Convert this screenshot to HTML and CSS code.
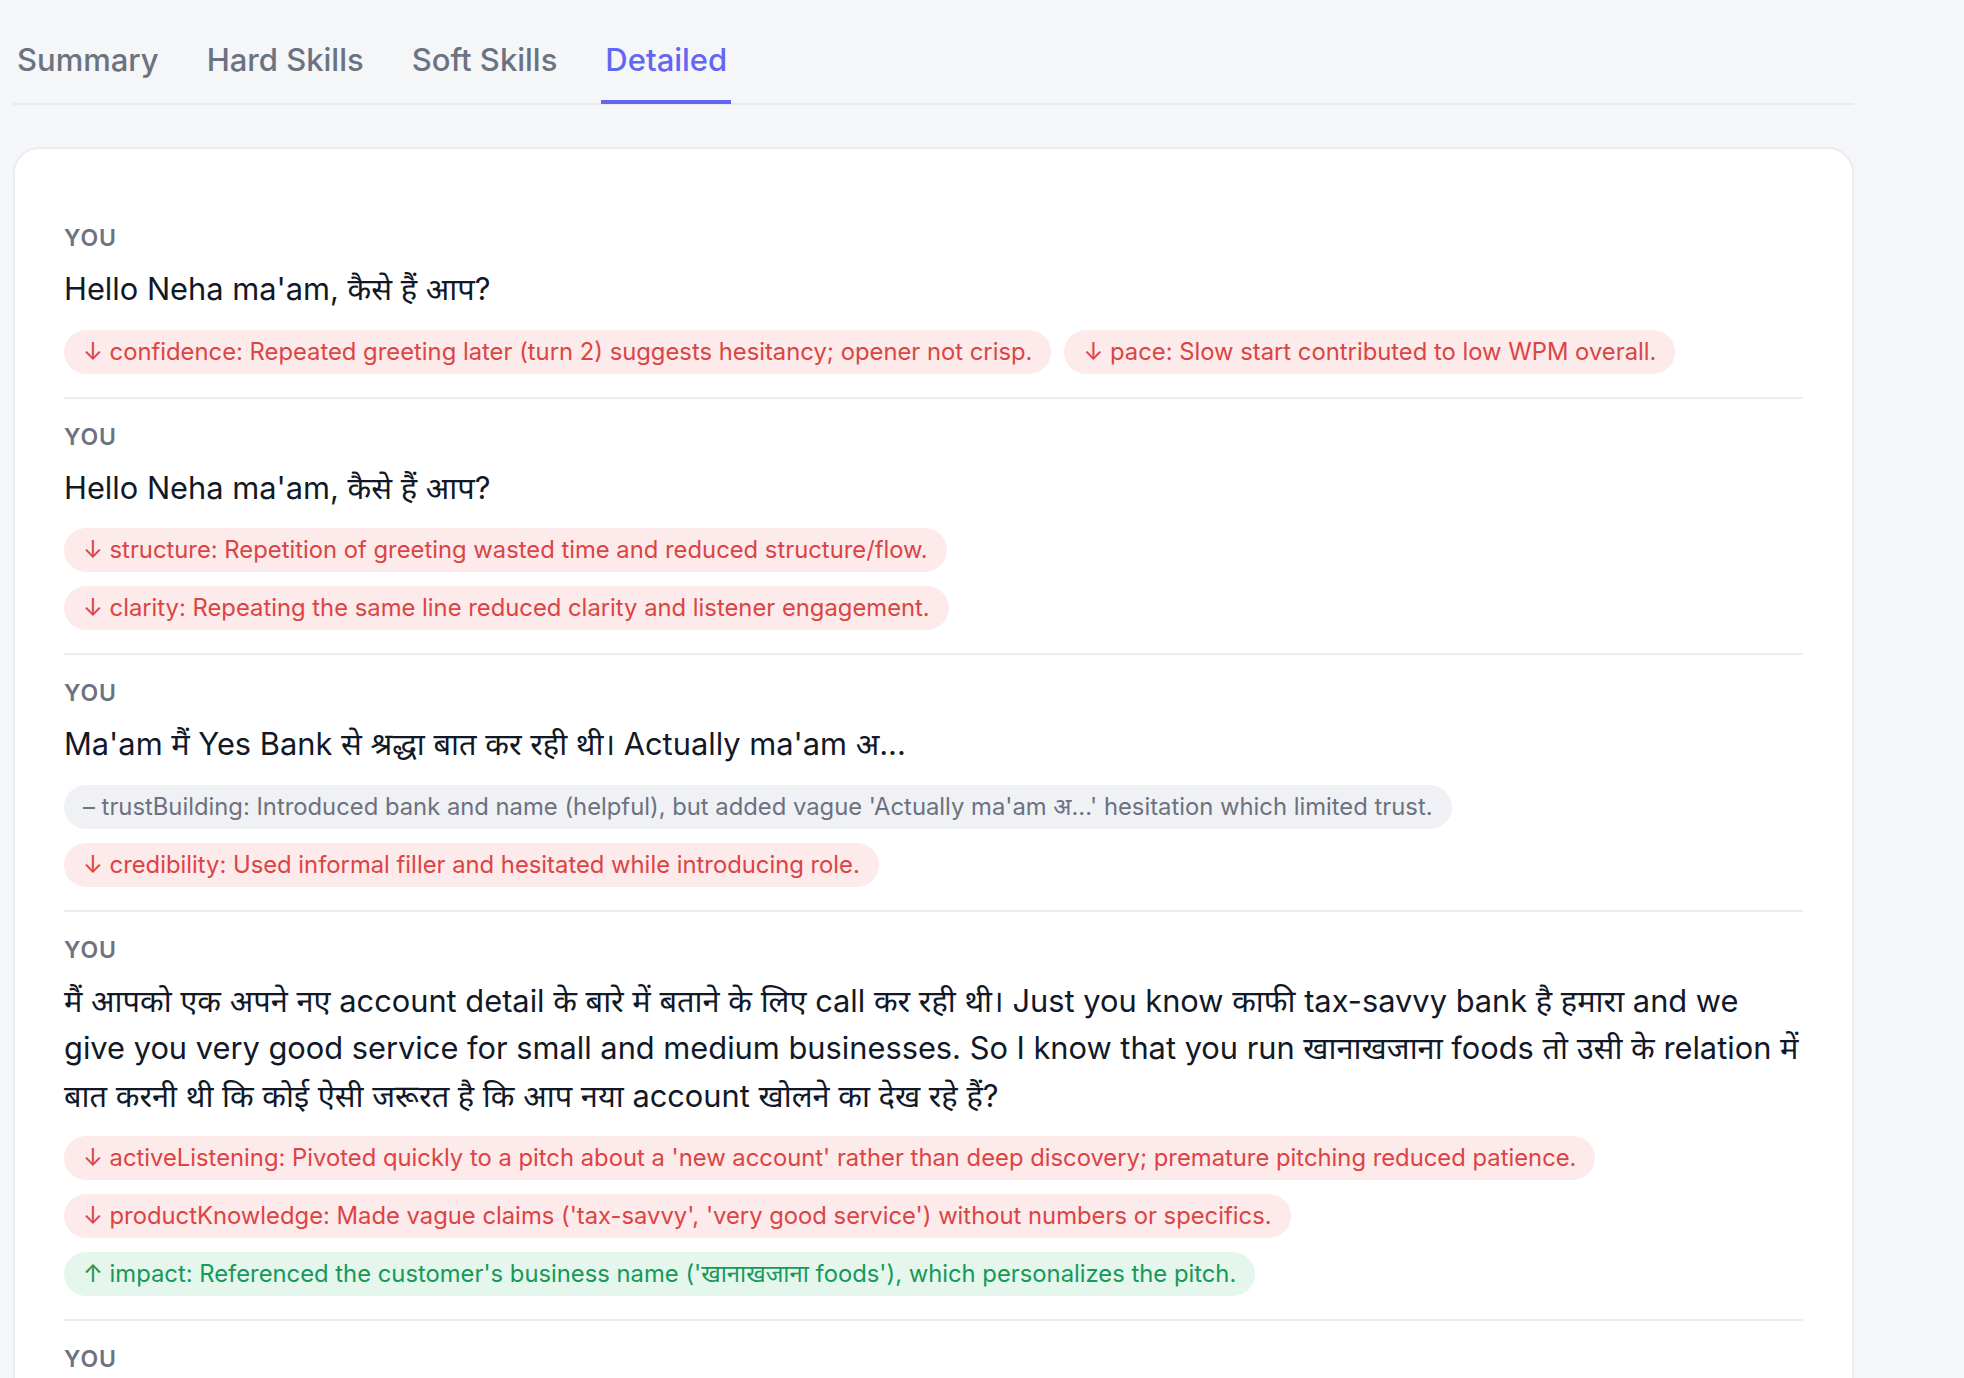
FILE: index.html
```html
<!DOCTYPE html>
<html lang="en">
<head>
<meta charset="UTF-8">
<meta name="viewport" content="width=device-width, initial-scale=1.0">
<title>Call Review - Detailed</title>
<link rel="stylesheet" href="styles.css">
</head>
<body>
<div class="page">
    <div class="tabs">
        <a class="tab" href="#">Summary</a>
        <a class="tab" href="#">Hard Skills</a>
        <a class="tab" href="#">Soft Skills</a>
        <a class="tab active" href="#">Detailed</a>
    </div>

    <div class="card">
        <div class="turn">
            <div class="speaker">You</div>
            <p class="message">Hello Neha ma'am, कैसे हैं आप?</p>
            <div class="notes">
                <span class="note down">↓ confidence: Repeated greeting later (turn 2) suggests hesitancy; opener not crisp.</span>
                <span class="note down">↓ pace: Slow start contributed to low WPM overall.</span>
            </div>
        </div>

        <div class="turn">
            <div class="speaker">You</div>
            <p class="message">Hello Neha ma'am, कैसे हैं आप?</p>
            <div class="notes">
                <span class="note down">↓ structure: Repetition of greeting wasted time and reduced structure/flow.</span>
                <span class="note down">↓ clarity: Repeating the same line reduced clarity and listener engagement.</span>
            </div>
        </div>

        <div class="turn">
            <div class="speaker">You</div>
            <p class="message">Ma'am मैं Yes Bank से श्रद्धा बात कर रही थी। Actually ma'am अ...</p>
            <div class="notes">
                <span class="note neutral">– trustBuilding: Introduced bank and name (helpful), but added vague 'Actually ma'am अ...' hesitation which limited trust.</span>
                <span class="note down">↓ credibility: Used informal filler and hesitated while introducing role.</span>
            </div>
        </div>

        <div class="turn">
            <div class="speaker">You</div>
            <p class="message">मैं आपको एक अपने नए account detail के बारे में बताने के लिए call कर रही थी। Just you know काफी tax-savvy bank है हमारा and we give you very good service for small and medium businesses. So I know that you run खानाखजाना foods तो उसी के relation में बात करनी थी कि कोई ऐसी जरूरत है कि आप नया account खोलने का देख रहे हैं?</p>
            <div class="notes">
                <span class="note down">↓ activeListening: Pivoted quickly to a pitch about a 'new account' rather than deep discovery; premature pitching reduced patience.</span>
                <span class="note down">↓ productKnowledge: Made vague claims ('tax-savvy', 'very good service') without numbers or specifics.</span>
                <span class="note up">↑ impact: Referenced the customer's business name ('खानाखजाना foods'), which personalizes the pitch.</span>
            </div>
        </div>

        <div class="turn">
            <div class="speaker">You</div>
        </div>
    </div>
</div>
</body>
</html>
```

FILE: styles.css
```css
body {
    margin: 0;
    padding: 0;
    background-color: #f5f6f8;
    font-family: Inter, "Noto Sans", "DejaVu Sans", sans-serif;
    color: #111827;
    overflow: hidden;
}

.page {
    width: 1841px;
    margin-left: 13px;
}

/* tab strip */
.tabs {
    display: flex;
    gap: 40px;
    padding-top: 40px;
    border-bottom: 2px solid #e8e9ee;
}
.tab {
    display: block;
    padding: 0 4px 20px;
    font-size: 31px;
    line-height: 40px;
    font-weight: 500;
    color: #6b7280;
    text-decoration: none;
    border-bottom: 4px solid transparent;
    margin-bottom: -1px;
}
.tab.active {
    color: #6366f1;
    border-bottom-color: #6366f1;
}

/* transcript card */
.card {
    margin-top: 42px;
    background-color: #fff;
    border: 2px solid #ebecf1;
    border-radius: 26px;
    padding: 51px 49px 48px;
    height: 1400px;
}
.turn {
    padding: 26px 0 23px;
    border-bottom: 2px solid #ecedf2;
}
.speaker {
    font-size: 23px;
    line-height: 25px;
    font-weight: 600;
    letter-spacing: 0.04em;
    text-transform: uppercase;
    color: #6b7280;
}
.message {
    margin: 14px 0 0;
    font-size: 30.8px;
    line-height: 47.5px;
    color: #111827;
}
.notes {
    display: flex;
    flex-wrap: wrap;
    gap: 14px 13px;
    margin-top: 17px;
}
.note {
    display: inline-block;
    padding: 6px 19px;
    border-radius: 999px;
    font-size: 23.8px;
    line-height: 32px;
}
.note.down {
    background-color: #fdeaea;
    color: #dc4444;
}
.note.up {
    background-color: #e5f6ec;
    color: #16995a;
}
.note.neutral {
    background-color: #f0f1f5;
    color: #6b7280;
}
```
